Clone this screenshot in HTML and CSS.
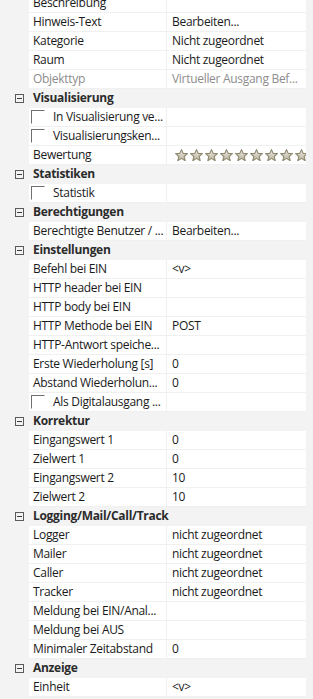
FILE: index.html
```html
<!DOCTYPE html>
<html>

<head>
    <title>Eigenschaften</title>
    <link rel="stylesheet" href="styles.css">
</head>

<body>
    <svg class="defs" width="0" height="0">
        <defs>
            <linearGradient id="starfill" x1="0" y1="0" x2="0" y2="1">
                <stop offset="0" stop-color="#eeebe2" />
                <stop offset="1" stop-color="#b9b39e" />
            </linearGradient>
            <symbol id="star" viewBox="0 0 13 13">
                <path d="M6.5 0.6 L8.15 4.33 L12.4 4.6 L9.16 7.47 L10.2 11.7 L6.5 9.4 L2.8 11.7 L3.84 7.47 L0.6 4.6 L4.85 4.33 Z"
                    fill="url(#starfill)" stroke="#8f8971" stroke-width="1.1" stroke-linejoin="round" />
            </symbol>
        </defs>
    </svg>

    <div class="grid">
        <div class="row"><span class="name">Beschreibung</span><span class="val"></span></div>
        <div class="row"><span class="name">Hinweis-Text</span><span class="val">Bearbeiten...</span></div>
        <div class="row"><span class="name">Kategorie</span><span class="val">Nicht zugeordnet</span></div>
        <div class="row"><span class="name">Raum</span><span class="val">Nicht zugeordnet</span></div>
        <div class="row readonly"><span class="name">Objekttyp</span><span class="val">Virtueller Ausgang Bef...</span></div>

        <div class="cat"><span class="toggle"></span>Visualisierung</div>
        <div class="row"><span class="name check"><span class="box"></span>In Visualisierung ve...</span><span class="val"></span></div>
        <div class="row"><span class="name check"><span class="box"></span>Visualisierungsken...</span><span class="val"></span></div>
        <div class="row"><span class="name">Bewertung</span>
            <span class="val">
                <svg class="stars" width="139" height="12">
                    <use href="#star" x="0" width="13" height="13" />
                    <use href="#star" x="15" width="13" height="13" />
                    <use href="#star" x="30" width="13" height="13" />
                    <use href="#star" x="45" width="13" height="13" />
                    <use href="#star" x="60" width="13" height="13" />
                    <use href="#star" x="75" width="13" height="13" />
                    <use href="#star" x="90" width="13" height="13" />
                    <use href="#star" x="105" width="13" height="13" />
                    <use href="#star" x="120" width="13" height="13" />
                </svg>
            </span>
        </div>

        <div class="cat"><span class="toggle"></span>Statistiken</div>
        <div class="row"><span class="name check"><span class="box"></span>Statistik</span><span class="val"></span></div>

        <div class="cat"><span class="toggle"></span>Berechtigungen</div>
        <div class="row"><span class="name">Berechtigte Benutzer / ...</span><span class="val">Bearbeiten...</span></div>

        <div class="cat"><span class="toggle"></span>Einstellungen</div>
        <div class="row"><span class="name">Befehl bei EIN</span><span class="val">&lt;v&gt;</span></div>
        <div class="row"><span class="name">HTTP header bei EIN</span><span class="val"></span></div>
        <div class="row"><span class="name">HTTP body bei EIN</span><span class="val"></span></div>
        <div class="row"><span class="name">HTTP Methode bei EIN</span><span class="val">POST</span></div>
        <div class="row"><span class="name">HTTP-Antwort speiche...</span><span class="val"></span></div>
        <div class="row"><span class="name">Erste Wiederholung [s]</span><span class="val">0</span></div>
        <div class="row"><span class="name">Abstand Wiederholun...</span><span class="val">0</span></div>
        <div class="row"><span class="name check"><span class="box"></span>Als Digitalausgang ...</span><span class="val"></span></div>

        <div class="cat"><span class="toggle"></span>Korrektur</div>
        <div class="row"><span class="name">Eingangswert 1</span><span class="val">0</span></div>
        <div class="row"><span class="name">Zielwert 1</span><span class="val">0</span></div>
        <div class="row"><span class="name">Eingangswert 2</span><span class="val">10</span></div>
        <div class="row"><span class="name">Zielwert 2</span><span class="val">10</span></div>

        <div class="cat"><span class="toggle"></span>Logging/Mail/Call/Track</div>
        <div class="row"><span class="name">Logger</span><span class="val">nicht zugeordnet</span></div>
        <div class="row"><span class="name">Mailer</span><span class="val">nicht zugeordnet</span></div>
        <div class="row"><span class="name">Caller</span><span class="val">nicht zugeordnet</span></div>
        <div class="row"><span class="name">Tracker</span><span class="val">nicht zugeordnet</span></div>
        <div class="row"><span class="name">Meldung bei EIN/Anal...</span><span class="val"></span></div>
        <div class="row"><span class="name">Meldung bei AUS</span><span class="val"></span></div>
        <div class="row"><span class="name">Minimaler Zeitabstand</span><span class="val">0</span></div>

        <div class="cat"><span class="toggle"></span>Anzeige</div>
        <div class="row"><span class="name">Einheit</span><span class="val">&lt;v&gt;</span></div>
    </div>
</body>

</html>
```

FILE: styles.css
```css
body {
    margin: 0;
    padding: 0;
    background-color: #f3f3f3;
    font-family: "Open Sans", "Noto Sans", sans-serif;
    font-size: 12px;
    letter-spacing: -0.3px;
    color: #1a1a1a;
    overflow: hidden;
}

.defs {
    display: block;
    height: 0;
}

/* list is scrolled a little, first row is cut off */
.grid {
    margin-top: -6px;
    width: 306px;
}

.row {
    display: grid;
    grid-template-columns: 138px 139px;
    margin-left: 29px;
    height: 18px;
    line-height: 18px;
    background: #fff;
    border-bottom: 1px solid #f0f0f0;
}

.name,
.val {
    white-space: nowrap;
    overflow: hidden;
}

.name {
    padding-left: 4px;
    border-right: 1px solid #f0f0f0;
}

.val {
    padding-left: 5px;
}

.readonly {
    color: #8d8d8d;
}

.check {
    display: flex;
    align-items: flex-start;
    padding-left: 2px;
}

.box {
    flex: none;
    width: 12px;
    height: 12px;
    margin-top: 2px;
    margin-right: 8px;
    border-top: 1px solid #6f6f6f;
    border-left: 1px solid #6f6f6f;
    border-bottom: 1px solid #fff;
    border-right: 1px solid #fff;
    background: #fff;
}

.stars {
    display: block;
    margin-top: 3px;
    margin-left: 3px;
}

.cat {
    display: flex;
    align-items: center;
    height: 18px;
    line-height: 18px;
    border-bottom: 1px solid #f3f3f3;
    font-weight: bold;
    color: #2b2b2b;
    white-space: nowrap;
}

.toggle {
    position: relative;
    flex: none;
    width: 7px;
    height: 7px;
    margin-left: 15px;
    margin-right: 9px;
    border: 1px solid #5a5a5a;
}

.toggle::after {
    content: "";
    position: absolute;
    left: 1px;
    top: 3px;
    width: 5px;
    height: 1px;
    background: #3c3c3c;
}
```
